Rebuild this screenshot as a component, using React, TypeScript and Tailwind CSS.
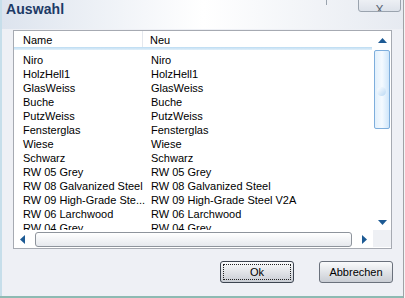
import React from 'react';

const rows: [string, string][] = [
  ['Niro', 'Niro'],
  ['HolzHell1', 'HolzHell1'],
  ['GlasWeiss', 'GlasWeiss'],
  ['Buche', 'Buche'],
  ['PutzWeiss', 'PutzWeiss'],
  ['Fensterglas', 'Fensterglas'],
  ['Wiese', 'Wiese'],
  ['Schwarz', 'Schwarz'],
  ['RW 05 Grey', 'RW 05 Grey'],
  ['RW 08 Galvanized Steel', 'RW 08 Galvanized Steel'],
  ['RW 09 High-Grade Ste...', 'RW 09 High-Grade Steel V2A'],
  ['RW 06 Larchwood', 'RW 06 Larchwood'],
  ['RW 04 Grey', 'RW 04 Grey'],
];

const font = { fontFamily: '"Liberation Sans", Arial, sans-serif' };

export default function App() {
  return (
    <div
      className="relative w-[405px] h-[298px] overflow-hidden bg-[#eef0f5] text-[11px] text-black"
      style={font}
    >
      {/* Title bar */}
      <div className="h-[29px] flex items-start bg-gradient-to-r from-[#dde4ee] via-[#ffffff] to-[#e6eaf1] border-l-2 border-[#c6deea]">
        <span className="pl-[4px] pt-[1px] text-[14px] leading-[16px] font-bold text-[#1d3a66] tracking-[0.1px]">Auswahl</span>
      </div>
      {/* close button, cut off at top */}
      <div className="absolute left-[358px] top-[-6px] w-[43px] h-[18px] rounded-b-[3px] border border-[#9aa3ae] bg-gradient-to-b from-[#f4f6f9] to-[#dde2ea] flex items-end justify-center overflow-hidden">
        <span className="text-[12px] leading-[12px] text-[#5a6472] mb-[-5px]">X</span>
      </div>
      <div className="absolute left-[326px] top-0 w-px h-[5px] bg-[#9aa3ae]" />

      {/* Body */}
      <div className="flex flex-col border-l-2 border-[#c6deea] h-[267px]">
        <div className="pl-[11px] pt-[1px]">
          <div className="w-[379px] h-[219px] border border-[#a6aab2] bg-white flex flex-col">
            <div className="flex flex-1 min-h-0">
              {/* list content */}
              <div className="flex-1 min-w-0 overflow-hidden">
                <div className="flex h-[16px] items-center">
                  <div className="w-[129px] pl-[9px] border-r border-[#e4e8ee] h-full flex items-center pt-[3px]">Name</div>
                  <div className="pl-[7px] pt-[3px]">Neu</div>
                </div>
                <div className="h-[3px] bg-gradient-to-b from-[#bcdcf2] to-[#e2f0fa]" />
                <div className="pt-[3px]">
                  {rows.map(([a, b]) => (
                    <div key={a} className="flex h-[14px] leading-[14px] whitespace-nowrap">
                      <div className="w-[129px] pl-[9px] shrink-0">{a}</div>
                      <div className="pl-[8px]">{b}</div>
                    </div>
                  ))}
                </div>
              </div>
              {/* vertical scrollbar */}
              <div className="w-[19px] flex flex-col items-center pt-[7px]">
                <svg width="9" height="5" viewBox="0 0 9 5" className="ml-[1px]">
                  <polygon points="4.5,0 9,5 0,5" fill="#1d5a94" />
                </svg>
                <div className="mt-[7px] w-[16px] h-[79px] rounded-[2px] border border-[#7eaedc] bg-gradient-to-r from-[#e2f0fc] via-[#f4faff] to-[#cfe6fa] flex items-center justify-center">
                  <div className="w-[9px] h-[9px] rounded-full bg-gradient-to-br from-[#ffffff] to-[#b8d8f4] mt-[4px]" />
                </div>
                <div className="flex-1" />
                <svg width="9" height="5" viewBox="0 0 9 5" className="ml-[1px] mb-[5px]">
                  <polygon points="0,0 9,0 4.5,5" fill="#1d5a94" />
                </svg>
              </div>
            </div>
            {/* horizontal scrollbar */}
            <div className="h-[18px] flex items-center bg-white">
              <svg width="5" height="9" viewBox="0 0 5 9" className="ml-[6px]">
                <polygon points="5,0 5,9 0,4.5" fill="#1d5a94" />
              </svg>
              <div className="ml-[10px] w-[317px] h-[15px] rounded-[3px] border border-[#8e949c] bg-gradient-to-b from-[#ffffff] to-[#e6e9ee]" />
              <svg width="5" height="9" viewBox="0 0 5 9" className="ml-[10px]">
                <polygon points="0,0 5,4.5 0,9" fill="#1d5a94" />
              </svg>
              <div className="ml-auto w-[18px] h-[17px] bg-[#eef0f4] self-start" />
            </div>
          </div>
        </div>

        {/* Buttons */}
        <div className="flex justify-end gap-[25px] pr-[12px] mt-[12px]">
          <button className="w-[74px] h-[22px] rounded-[3px] border border-[#3c4450] bg-gradient-to-b from-[#fafbfc] to-[#c9cdd4] p-[2px]">
            <div className="w-full h-full border border-dotted border-[#222] flex items-center justify-center leading-none">Ok</div>
          </button>
          <button className="w-[74px] h-[22px] rounded-[3px] border border-[#6a717c] bg-gradient-to-b from-[#fafbfc] to-[#c9cdd4] flex items-center justify-center leading-none">
            Abbrechen
          </button>
        </div>
      </div>

      {/* frame edges */}
      <div className="absolute left-0 bottom-0 w-[405px] h-[2px] bg-[#8dbab2]" />
      <div className="absolute left-[403px] top-0 w-px h-[298px] bg-[#a0a2a6]" />
      <div className="absolute left-[404px] top-0 w-px h-[298px] bg-[#f4f4f4]" />
    </div>
  );
}
